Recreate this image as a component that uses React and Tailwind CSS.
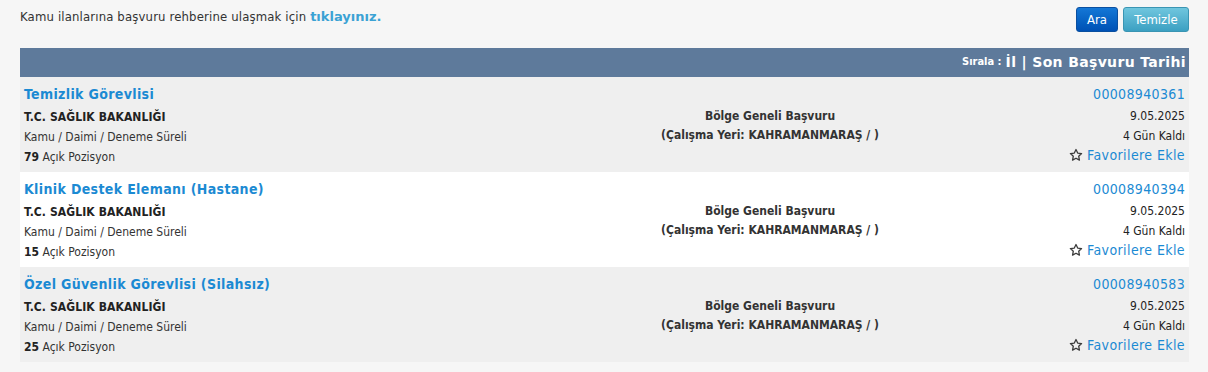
import React from "react";

const FONT = { fontFamily: '"DejaVu Sans Condensed", "DejaVu Sans", Verdana, sans-serif' };
const WIDE = { fontFamily: '"DejaVu Sans", Verdana, sans-serif' };

const rows = [
  { title: "Temizlik Görevlisi", id: "00008940361", count: "79", bg: "bg-[#efefef]" },
  { title: "Klinik Destek Elemanı (Hastane)", id: "00008940394", count: "15", bg: "bg-white" },
  { title: "Özel Güvenlik Görevlisi (Silahsız)", id: "00008940583", count: "25", bg: "bg-[#efefef]" },
];

function Star() {
  return (
    <svg width="14" height="14" viewBox="0 0 24 24" fill="none" stroke="#3a3a3a" strokeWidth="2.2" strokeLinejoin="round">
      <path d="M12 2.5l2.9 6.2 6.7.8-5 4.6 1.3 6.7L12 17.5l-5.9 3.3 1.3-6.7-5-4.6 6.7-.8z" />
    </svg>
  );
}

function Row({ r }) {
  return (
    <div className={`flex h-[95px] ${r.bg}`}>
      <div className="flex-1 pl-[4px] pt-[5px]">
        <div className="h-[25px] leading-[25px] text-[14px] font-bold tracking-[0.35px] text-[#1b8ad3]">{r.title}</div>
        <div className="h-[20px] leading-[20px] text-[12px] font-bold tracking-[0.1px] text-[#222]">T.C. SAĞLIK BAKANLIĞI</div>
        <div className="h-[20px] leading-[20px] text-[12px] text-[#333]">Kamu / Daimi / Deneme Süreli</div>
        <div className="h-[20px] leading-[20px] text-[12px] text-[#333]">
          <span className="font-bold text-[#222]">{r.count}</span> Açık Pozisyon
        </div>
      </div>
      <div className="w-[330px] flex flex-col justify-center items-center pt-[2px] text-[12px] font-bold text-[#333]">
        <div className="h-[19px] leading-[19px]">Bölge Geneli Başvuru</div>
        <div className="h-[19px] leading-[19px]">(Çalışma Yeri: KAHRAMANMARAŞ / )</div>
      </div>
      <div className="w-[254px] flex flex-col items-end pr-[4px] pt-[5px]">
        <div className="h-[24px] leading-[24px] text-[14px] tracking-[0.35px] text-[#1b8ad3]">{r.id}</div>
        <div className="h-[20px] leading-[20px] text-[12px] text-[#222]">9.05.2025</div>
        <div className="h-[20px] leading-[20px] text-[12px] text-[#222]">4 Gün Kaldı</div>
        <div className="h-[18px] leading-[18px] text-[14px] text-[#1b8ad3] flex items-center gap-[4px]">
          <Star />
          <span className="tracking-[0.4px]">Favorilere Ekle</span>
        </div>
      </div>
    </div>
  );
}

export default function App() {
  return (
    <div className="w-[1208px] h-[372px] bg-[#f6f6f6] overflow-hidden" style={FONT}>
      <div className="flex justify-between px-[19px] h-[48px]">
        <div className="pt-[8px] pl-[1px] text-[13px] leading-[18px] tracking-[0.15px] text-[#333]">
          Kamu ilanlarına başvuru rehberine ulaşmak için{" "}
          <span className="font-bold tracking-normal text-[#3ba2d4]" style={WIDE}>tıklayınız.</span>
        </div>
        <div className="flex gap-[5px] pt-[7px]">
          <button className="h-[25px] w-[42px] rounded-[3px] border border-[#0a4fa0] bg-gradient-to-b from-[#1477d6] to-[#0051b5] text-white text-[13px]">Ara</button>
          <button className="h-[25px] w-[66px] rounded-[3px] border border-[#3a95b3] bg-gradient-to-b from-[#6fc6de] to-[#3ba0c2] text-white text-[13px]">Temizle</button>
        </div>
      </div>
      <div className="mx-[20px] w-[1169px]">
        <div className="h-[29px] bg-[#5e7a9b] flex items-center justify-end pr-[3px] text-white font-bold">
          <span className="text-[11px]">Sırala :</span>
          <span className="text-[14px] ml-[4px] tracking-[0.35px]" style={WIDE}>İl | Son Başvuru Tarihi</span>
        </div>
        {rows.map((r) => (
          <Row key={r.id} r={r} />
        ))}
      </div>
    </div>
  );
}
